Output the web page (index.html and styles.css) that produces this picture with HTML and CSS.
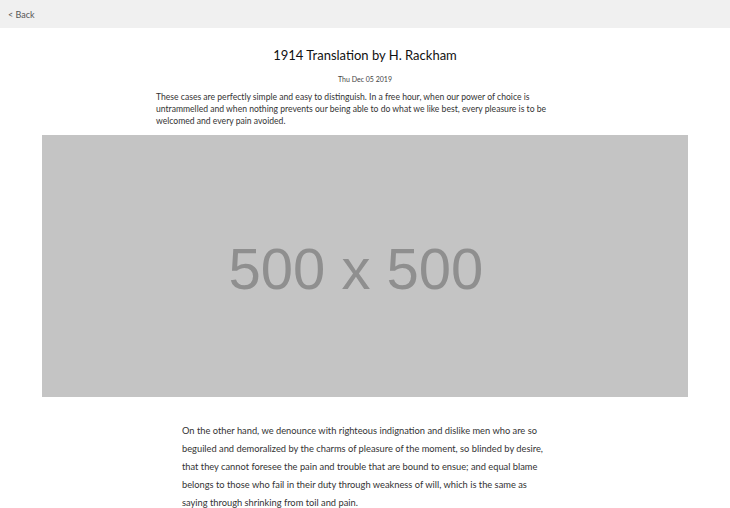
FILE: index.html
```html
<!DOCTYPE html>
<html>
<head>
<meta charset="utf-8">
<link rel="stylesheet" href="styles.css">
</head>
<body>
<header class="topbar"><a class="back" href="#">&lt; Back</a></header>
<main class="post">
  <h1 class="title">1914 Translation by H. Rackham</h1>
  <div class="date">Thu Dec 05 2019</div>
  <p class="intro">These cases are perfectly simple and easy to distinguish. In a free hour, when our power of choice is untrammelled and when nothing prevents our being able to do what we like best, every pleasure is to be welcomed and every pain avoided.</p>
  <div class="image"><span class="image-label">500 x 500</span></div>
  <p class="body">On the other hand, we denounce with righteous indignation and dislike men who are so beguiled and demoralized by the charms of pleasure of the moment, so blinded by desire, that they cannot foresee the pain and trouble that are bound to ensue; and equal blame belongs to those who fail in their duty through weakness of will, which is the same as saying through shrinking from toil and pain.</p>
</main>
</body>
</html>
```
FILE: styles.css
```css
html, body { margin: 0; padding: 0; background: #fff; }
body { font-family: Lato, "Open Sans", sans-serif; color: #222; }
.topbar { height: 28px; background: #f0f0f0; display: flex; align-items: center; padding-left: 8px; }
.back { font-size: 9px; color: #555; text-decoration: none; }
.post { display: flex; flex-direction: column; align-items: center; }
.title { font-size: 13px; font-weight: 400; margin: 18px 0 0; line-height: 18px; color: #111; }
.date { font-size: 7px; color: #444; margin-top: 10px; line-height: 10px; }
.intro { width: 418px; font-size: 8.6px; line-height: 12px; color: #333; margin: 7px 0 0; }
.image { width: 646px; height: 262px; background: #c4c4c4; margin-top: 8px; display: flex; align-items: center; justify-content: center; }
.image-label { font-family: "Liberation Sans", Arial, sans-serif; font-size: 58px; color: #8f8f8f; margin-right: 18px; margin-top: 4px; }
.body { width: 370px; font-size: 9.3px; line-height: 18px; color: #333; margin: 25px 0 0 4px; }
```
